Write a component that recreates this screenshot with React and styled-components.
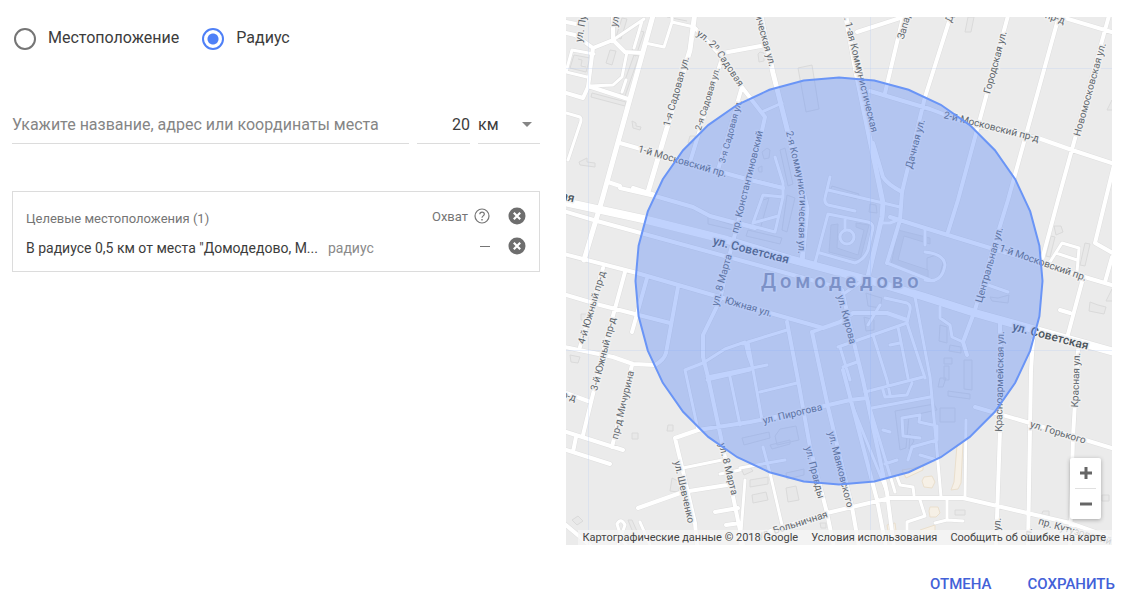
import React, { useState } from "react";
import styled, { createGlobalStyle } from "styled-components";

const GlobalStyle = createGlobalStyle`
  *, *::before, *::after { box-sizing: border-box; }
  body {
    margin: 0;
    background: #fff;
    color: #3c3c3c;
    font-family: Roboto, "Liberation Sans", sans-serif;
    font-size: 16px;
  }
  button, input, select { font: inherit; color: inherit; }
`;

const Page = styled.main`
  padding: 17px 0 0;
`;

const Columns = styled.div`
  display: grid;
  grid-template-columns: minmax(0, 528fr) minmax(0, 546fr);
  gap: 26px;
  padding: 0 11px 0 12px;
`;

const Panel = styled.section`
  min-width: 0;
`;

const RadioGroup = styled.div`
  display: flex;
  gap: 23px;
  padding: 11px 0 0 2px;
`;

const RadioLabel = styled.label`
  display: flex;
  align-items: flex-start;
  gap: 12px;
  height: 22px;
  font-size: 16px;
  line-height: 20px;
  color: #3c3c3c;
  cursor: pointer;
`;

const Radio = styled.input`
  appearance: none;
  width: 22px;
  height: 22px;
  margin: 0;
  border: 2px solid #757575;
  border-radius: 50%;
  background: #fff;
  &:checked {
    border-color: #4f80f7;
    background: radial-gradient(circle, #4f80f7 5px, #fff 6px);
  }
`;

const SearchRow = styled.div`
  display: grid;
  grid-template-columns: minmax(0, 1fr) 53px 62px;
  column-gap: 8px;
  margin-top: 54px;
`;

const field = `
  width: 100%;
  height: 40px;
  padding: 2px 0 0;
  border: 0;
  border-bottom: 1px solid #dcdcdc;
  border-radius: 0;
  outline: 0;
  background: transparent;
  font-size: 16px;
  color: #3c3c3c;
`;

const Field = styled.input`
  ${field}
  text-align: ${(p) => (p.$align ? p.$align : "left")};
  &::placeholder { color: #858585; opacity: 1; }
`;

const UnitBox = styled.div`
  display: flex;
  align-items: center;
  border-bottom: 1px solid #dcdcdc;
  height: 40px;
`;

const Unit = styled.select`
  appearance: none;
  flex: 1;
  min-width: 0;
  height: 39px;
  padding: 2px 0 0;
  border: 0;
  outline: 0;
  background: transparent;
  font-size: 16px;
  color: #3c3c3c;
`;

const Caret = styled.span`
  margin: 2px 8px 0 0;
  border: 5px solid transparent;
  border-top-color: #858585;
  border-bottom: 0;
  pointer-events: none;
`;

const Targets = styled.section`
  margin-top: 47px;
  padding: 9px 13px 10px;
  border: 1px solid #dcdcdc;
`;

const TargetRow = styled.div`
  display: flex;
  align-items: center;
  height: 30px;
`;

const TargetsTitle = styled.h2`
  flex: 1;
  margin: 4px 0 0;
  font-size: 13px;
  font-weight: 400;
  color: #757575;
`;

const Reach = styled.span`
  font-size: 13px;
  color: #757575;
`;

const Place = styled.span`
  margin-top: 4px;
  font-size: 14px;
  color: #3c3c3c;
  white-space: nowrap;
`;

const Kind = styled.span`
  flex: 1;
  margin: 4px 0 0 10px;
  font-size: 14px;
  color: #8a8a8a;
`;

const Dash = styled.span`
  width: 10px;
  height: 1px;
  background: #757575;
`;

const IconButton = styled.button`
  display: flex;
  padding: 0;
  border: 0;
  background: none;
  cursor: pointer;
  margin-left: ${(p) => p.$gap}px;
`;

const MapBox = styled.section`
  position: relative;
  min-width: 0;
`;

const MapSvg = styled.svg`
  display: block;
  width: 100%;
  background: #ebebeb;
  font-family: Roboto, "Liberation Sans", sans-serif;
`;

const ZoomControl = styled.div`
  position: absolute;
  right: 11px;
  bottom: 26px;
  width: 31px;
  padding: 0 5px;
  background: #fff;
  border-radius: 2px;
  box-shadow: 0 1px 4px rgba(0, 0, 0, 0.3);
`;

const ZoomButton = styled.button`
  display: flex;
  align-items: center;
  justify-content: center;
  width: 100%;
  height: 30px;
  padding: 0;
  border: 0;
  background: none;
  cursor: pointer;
  & + & {
    height: 31px;
    border-top: 1px solid #e0e0e0;
  }
`;

const Attribution = styled.div`
  position: absolute;
  right: 0;
  bottom: 0;
  display: flex;
  gap: 13px;
  height: 15px;
  padding: 0 6px 0 5px;
  background: rgba(245, 245, 245, 0.75);
  font-size: 11px;
  line-height: 15px;
  color: #444;
  white-space: nowrap;
  a { color: inherit; text-decoration: none; }
`;

const Actions = styled.footer`
  display: flex;
  justify-content: flex-end;
  gap: 36px;
  padding: 27px 8px 0 0;
`;

const Action = styled.button`
  padding: 0;
  border: 0;
  background: none;
  font-size: 15px;
  font-weight: 500;
  line-height: 24px;
  color: #4361d8;
  cursor: pointer;
`;

/* Streets by width; each path is in the map's own coordinates. */
const roads = {
  8: ["M560 201L643 219 727 240 790 259 872 281 925 297 975 313 1118 353"],
  5: [
    "M654 12L602 200 584 260",
    "M845 12L857 77 883 203 882 217 868 277",
    "M760 12L773 73 807 208 802 262",
    "M695 12L690 50 648 192",
  ],
  4: [
    "M695 28L722 57 741 86 765 117 761 135 744 200 730 253 720 300 703 335 703 357 708 377 720 433 743 545",
    "M723 53L766 45",
    "M722 58L690 162",
    "M741 90L718 170",
    "M620 143L700 166 750 180 783 188",
    "M608 182L620 186M633 188L655 195M620 188L655 196 693 207 710 216 755 228",
    "M566 33L575 35 593 48 613 40 625 52 642 53M613 40L613 12M566 22L576 24M593 48L588 87 583 98 566 93M588 86L628 99",
    "M560 210L597 221 750 263 840 288",
    "M560 253L637 273 723 298 770 313 823 328 840 322 853 313 887 313 907 320",
    "M560 293L600 305 670 323M560 346L613 357 633 364 655 365Q664 360 666 353L678 287",
    "M603 268L580 347M625 272L605 345 583 435M647 278L632 332M632 365L612 447",
    "M560 430L623 450M560 448L610 464M576 437L573 452M566 393L588 401M560 520L592 547",
    "M697 545L695 523 682 467 675 438 698 430 750 422 790 414 850 400 867 398",
    "M638 508L683 492 727 485M715 512L738 508M726 525L740 523",
    "M787 322L798 380 810 447 827 513 834 547",
    "M812 332L828 407 852 507 859 547M812 332L825 327",
    "M842 290L855 347 863 380 887 493 894 547M843 370L877 500 886 547",
    "M768 532L827 513 890 498 963 498 1070 523 1118 540",
    "M903 17L885 93M857 32L900 18M870 91L930 109 972 125 1038 138 1072 150 1118 165",
    "M952 12L925 97 902 192 900 220 887 263M873 143L883 177Q887 184 902 192",
    "M1009 12L958 200 948 232M1060 12L1008 200 988 265 975 310 963 342 967 355M1045 12L1118 34M1110 12L1058 200 1042 260",
    "M1114 165L1095 243 1118 256M1112 257L1105 282M890 217L925 228 1000 251 1088 278 1118 287",
    "M1082 282L1067 338M1060 310L1070 313M1000 323L1000 430 996 547M1033 340L1031 370 1028 547M1078 350L1073 437 1070 547",
    "M975 407L1030 423 1118 450",
  ],
  3: [
    "M645 43L664 47 672 22 694 27M672 22L672 12M613 40L644 19M627 52L622 77 613 85 590 86M572 50L594 54M572 50L566 72 587 77M642 21L634 48M626 80L622 92",
    "M566 113L580 117Q582 119 580 124L568 160",
    "M683 468L722 460M685 370L698 430M685 370L703 363 725 349 745 342 748 355 752 366M707 377L767 365M730 377L740 425M707 380L750 370",
    "M748 342L787 330M748 342L762 420M760 392L797 383M763 447L770 473 782 525M740 468L785 460M740 470L720 474",
    "M762 112L782 103M775 157L783 183 783 198M740 177L783 188",
    "M753 223L763 195 783 197 775 232 740 223M753 223L778 216",
    "M828 214L868 222Q875 224 872 232L868 250Q864 260 855 263L820 253M828 214L815 263M845 218L845 228",
    "M830 177L825 198Q824 203 828 205L855 211M828 190L900 207",
    "M882 223L890 223 900 219M887 263L930 280M925 228L925 245",
    "M842 295L868 277M838 347L907 323M840 347L850 380M843 367L857 362M873 335L887 380 890 395M898 327L908 378M907 323L925 378M885 298L907 303Q911 305 910 310L907 323M915 297L930 377 936 440 941 497",
    "M865 392L923 377M883 390L885 397 907 395 912 383M872 408L930 397M850 400L887 492M867 398L895 492M883 430L890 432M885 464L897 460",
    "M897 477L900 485 913 487 914 495M907 540L907 522 925 516 920 500M890 345L900 343",
    "M940 307L940 318 950 325 952 337 963 342M988 285L1008 292M925 280Q942 284 945 265Q944 254 925 252",
    "M902 418L920 415 919 422 937 426 937 440 912 447 908 460M902 418L903 436 920 438",
    "M966 420L965 497M947 500L947 520 963 521M947 520L935 523M920 455L937 460",
    "M1050 262L1062 243 1079 248 1077 272M1056 253L1077 260",
    "M880 305L868 325M618 545L625 525Q621 517 617 524L622 540 632 552M640 522L650 545",
    "M745 480L740 545",
  ],
};

/* Building outlines. */
const buildings =
  "M610 50l6 1-4 14-6-2zM574 55l16 3-4 14-16-4zM578 59l4 1-1 6 5 1M638 30l6 2-8 24-5-2zM622 18l5 1-6 20-5-2zM634 55l5 1-14 40-5-2zM592 93l34 9-1 4-34-9zM632 121l4 2v3l5 1-1 3-7-2zM579 162l8-4v4l8 1v4l-15-2zM667 17l20 4M690 136h5v7h-7zM760 52l4 1 0 8-5 1-1-8zM798 68l14-3 7 44-13 3zM762 152l5-4 3 2-1 8-5 1zM758 168l4-2v6h-3zM780 150l5-2 8 36-5 2zM763 200l6-2-8 28M787 195l8 3-8 34-5-2zM748 230l34 8-2 6-34-8zM708 217l28 9-2 4-26-6zM832 186l27 8-2 5-27-8zM870 204l6 1 1 8-8-1zM968 17h6l-3 15h-6zM1112 100l-5 10h8zM1054 226h7l2 6-7 3zM1051 236l4 1-5 20-4-1zM1085 243l5 1-5 22-5-1zM1090 302l8 3 8 2-2 7-15-3zM1112 289l-6 12h8zM990 297l8 1 11-3-1 8-16-2zM927 258l12-4 4 9-4 15-12 3zM866 293l9 3 7 2-2 10-12-2zM864 317l10 3v10l-8 1zM940 325l7 2v16l-8-2zM950 345l11 2 0 6-12-2zM944 358h8v6h-8zM944 366h5v14h-5zM964 360h8v30l-8-1zM581 314h7v6h-7zM570 355l10 2-2 6-7-1zM632 433h6v6h-6zM668 425h5v6h-6zM672 478l8 4-2 10-8-1zM572 520l6-4 5 5-6 4zM628 520l4 0 8 18-4 2zM742 438l27-6 1 6-26 7zM780 429l16-3 3 14-22 5-2-9zM770 445l20-5 0 4-18 5zM750 480l18-3v7l-18 3zM752 495l14-3 2 8-15 3zM786 488l10-2 3 14-11 2zM786 473l18-4v6l-17 4zM741 468l8-2 4 5-9 4zM940 378h6l-3 9h-5zM948 391l22 3 0 5-22-3zM940 408h15v14h-15zM895 411l39-7 3 6-28 6 -3 32-6 2zM910 434l4 7-5 8zM955 510h10v5h-10zM1043 511h6l0 5h-8zM1102 495h7v6h-7zM820 523l6 0 0 5-5 0z";
const courts =
  "M831 225l7-1-1 24 21 7 6-25-8-3 0-4 13 2-9 35-31-8zM898 230l32 8v6l-26-8-6 24 30 10v8l-37-13z";
const shops =
  "M902 470l12-2 9-3 0 5-17 8zM957 445l6-2-2 40-3 6-7 1 3-8zM924 477l8-1 3 6-3 6-8-1-2-6zM930 507l8 0 2 6-4 4-6 0-1-6zM887 525l8-2 1 8-8 0zM920 530l15-5 0 7-15 3z";

/* Street names drawn along a line through the middle of their letters. */
const labels = [
  [579, 41, 585, 8, "ул. Пуш"],
  [614, 26, 621, 0, "ул. Ле"],
  [667, 125, 686, 58, "1-я Садовая ул."],
  [698, 130, 717, 68, "2-я Садовая ул.", 9],
  [722, 162, 739, 101, "3-я Садовая ул.", 9],
  [639, 149, 726, 174, "1-й Московский пр."],
  [735, 232, 760, 132, "пр. Константиновский"],
  [757, 11, 772, 65, "тическая ул."],
  [845, 10, 875, 134, "л. 1-ая Коммунистическая"],
  [900, 41, 911, 4, "Западн"],
  [948, 23, 951, 14, "Д"],
  [909, 168, 922, 120, "Дачная ул."],
  [987, 94, 1004, 31, "Городская ул."],
  [1046, 15, 1064, 21, "пр-д"],
  [944, 115, 1039, 139, "2-й Московский пр-д"],
  [1077, 136, 1103, 43, "Новомосковская ул."],
  [715, 306, 729, 254, "ул. 8 Марта"],
  [725, 300, 772, 314, "Южная ул."],
  [840, 295, 853, 344, "ул. Кирова"],
  [581, 345, 603, 270, "4-й Южный пр-д"],
  [594, 391, 613, 317, "3-й Южный пр-д"],
  [615, 438, 631, 372, "пр-д Мичурина"],
  [561, 394, 577, 399, "р-д"],
  [677, 461, 691, 523, "ул. Шевченко"],
  [721, 441, 735, 497, "ул. 8 Марта"],
  [763, 421, 822, 407, "ул. Пирогова"],
  [808, 447, 821, 498, "ул. Правды"],
  [831, 432, 850, 507, "ул. Маяковского"],
  [758, 536, 828, 514, "ул. Больничная"],
  [1000, 248, 1086, 278, "1-й Московский пр."],
  [979, 302, 1000, 228, "Центральная ул."],
  [999, 431, 1001, 332, "Красноармейская ул."],
  [1075, 407, 1077, 353, "Красная ул."],
  [1030, 424, 1086, 441, "ул. Горького"],
  [1038, 521, 1112, 542, "пр. Кутузовский"],
  [997, 531, 998, 517, "ул."],
  [1028, 541, 1029, 528, "ул."],
];

const majorLabels = [
  [560, 195, 576, 199, "ая"],
  [712, 240, 790, 260, "ул. Советская"],
  [1012, 326, 1089, 346, "ул. Советская"],
];

const circle = Array.from({ length: 36 }, (_, i) => {
  const a = (i * Math.PI) / 18;
  return `${(839 + 203.5 * Math.sin(a)).toFixed(1)},${(281 - 203.5 * Math.cos(a)).toFixed(1)}`;
}).join(" ");

function StreetName({ line, major }) {
  const [x1, y1, x2, y2, text, size] = line;
  const angle = (Math.atan2(y2 - y1, x2 - x1) * 180) / Math.PI;
  return (
    <text
      transform={`translate(${(x1 + x2) / 2} ${(y1 + y2) / 2}) rotate(${angle})`}
      textAnchor="middle"
      dy={major ? 4 : 3}
      fontSize={major ? 12 : size || 10}
      fontWeight={major ? 500 : 400}
      fill={major ? "#4c555c" : "#61676d"}
    >
      {text}
    </text>
  );
}

function CityMap() {
  return (
    <MapSvg viewBox="566 17 546 528" role="img" aria-label="Карта: Домодедово">
      <g fill="#e8e8e8" stroke="#dadada">
        <path d={buildings} />
        <path d={courts} fill="#e3e3e3" />
        <path d={shops} fill="#f6f0e6" stroke="#eadfcd" />
      </g>
      <g fill="none" strokeLinejoin="round" strokeLinecap="round">
        {[3, 4, 5, 8].map((w) => (
          <path key={w} d={roads[w].join("")} stroke="#dedede" strokeWidth={w + 1} />
        ))}
        <circle cx="847" cy="237" r="7" stroke="#dedede" strokeWidth="4" />
        {[3, 4, 5, 8].map((w) => (
          <path key={w} d={roads[w].join("")} stroke="#fff" strokeWidth={w} />
        ))}
        <circle cx="847" cy="237" r="7" stroke="#fff" strokeWidth="3" />
        <path d="M566 68.5H1112M566 350.500H1112M588.500 17V545M870.500 17V545" stroke="#b9cdf2" strokeOpacity=".3" />
      </g>
      <g stroke="#f0f0f0" strokeWidth="3" strokeLinejoin="round" paintOrder="stroke">
        {labels.map((line) => (
          <StreetName key={line.join()} line={line} />
        ))}
        {majorLabels.map((line) => (
          <StreetName key={line.join()} line={line} major />
        ))}
        <path id="sadovaya" d="M696 35Q709 43 718 56T743 94" fill="none" stroke="none" />
        <path id="kommun" d="M786 132L794 165Q801 190 799 215L798 270" fill="none" stroke="none" />
        <g fontSize="10" fill="#61676d">
          <text>
            <textPath href="#sadovaya">ул. 2ⁿ Садовая</textPath>
          </text>
          <text>
            <textPath href="#kommun">2-я Коммунистическая ул.</textPath>
          </text>
        </g>
        <text x="761" y="288" fontSize="20" fontWeight="500" letterSpacing="4" fill="#9297a8">
          Домодедово
        </text>
      </g>
      <polygon
        points={circle}
        fill="#5a88fa"
        fillOpacity=".38"
        stroke="#6a95f6"
        strokeWidth="2"
      />
    </MapSvg>
  );
}

function RemoveIcon() {
  return (
    <svg width="18" height="18" viewBox="0 0 18 18" aria-hidden="true">
      <circle cx="9" cy="9" r="8.500" fill="#6e6e6e" />
      <path d="M5.800 5.800L12.200 12.200M12.200 5.800L5.800 12.200" stroke="#fff" strokeWidth="2.200" />
    </svg>
  );
}

function HelpIcon() {
  return (
    <svg width="16" height="16" viewBox="0 0 16 16" fill="none" stroke="#757575" aria-hidden="true">
      <circle cx="8" cy="8" r="7" strokeWidth="1.200" />
      <path d="M5.800 6.300C5.800 3.400 10.300 3.500 10.300 6.200C10.300 7.800 8 8 8 9.800" strokeWidth="1.200" />
      <path d="M8 11V12.400" strokeWidth="1.400" />
    </svg>
  );
}

export default function App() {
  const [mode, setMode] = useState("radius");
  return (
    <Page>
      <GlobalStyle />
      <Columns>
        <Panel>
          <RadioGroup role="radiogroup" aria-label="Способ поиска">
            <RadioLabel>
              <Radio type="radio" name="mode" checked={mode === "place"} onChange={() => setMode("place")} />
              Местоположение
            </RadioLabel>
            <RadioLabel>
              <Radio type="radio" name="mode" checked={mode === "radius"} onChange={() => setMode("radius")} />
              Радиус
            </RadioLabel>
          </RadioGroup>
          <SearchRow>
            <Field
              type="text"
              aria-label="Место"
              placeholder="Укажите название, адрес или координаты места"
            />
            <Field type="text" aria-label="Радиус" defaultValue="20" $align="right" />
            <UnitBox>
              <Unit aria-label="Единица измерения" defaultValue="km">
                <option value="km">км</option>
                <option value="mi">мили</option>
              </Unit>
              <Caret />
            </UnitBox>
          </SearchRow>
          <Targets>
            <TargetRow>
              <TargetsTitle>Целевые местоположения (1)</TargetsTitle>
              <Reach>Охват</Reach>
              <IconButton type="button" aria-label="Справка" $gap={6}>
                <HelpIcon />
              </IconButton>
              <IconButton type="button" aria-label="Удалить все" $gap={18}>
                <RemoveIcon />
              </IconButton>
            </TargetRow>
            <TargetRow>
              <Place>В радиусе 0,5 км от места "Домодедово, М...</Place>
              <Kind>радиус</Kind>
              <Dash />
              <IconButton type="button" aria-label="Удалить" $gap={18}>
                <RemoveIcon />
              </IconButton>
            </TargetRow>
          </Targets>
        </Panel>
        <MapBox>
          <CityMap />
          <ZoomControl>
            <ZoomButton type="button" aria-label="Увеличить">
              <svg width="12" height="12" viewBox="0 0 12 12" stroke="#666" strokeWidth="3">
                <path d="M0 6H12M6 0V12" />
              </svg>
            </ZoomButton>
            <ZoomButton type="button" aria-label="Уменьшить">
              <svg width="12" height="12" viewBox="0 0 12 12" stroke="#666" strokeWidth="3">
                <path d="M0 6H12" />
              </svg>
            </ZoomButton>
          </ZoomControl>
          <Attribution>
            <span>Картографические данные © 2018 Google</span>
            <a href="#terms">Условия использования</a>
            <a href="#report">Сообщить об ошибке на карте</a>
          </Attribution>
        </MapBox>
      </Columns>
      <Actions>
        <Action type="button">ОТМЕНА</Action>
        <Action type="button">СОХРАНИТЬ</Action>
      </Actions>
    </Page>
  );
}
